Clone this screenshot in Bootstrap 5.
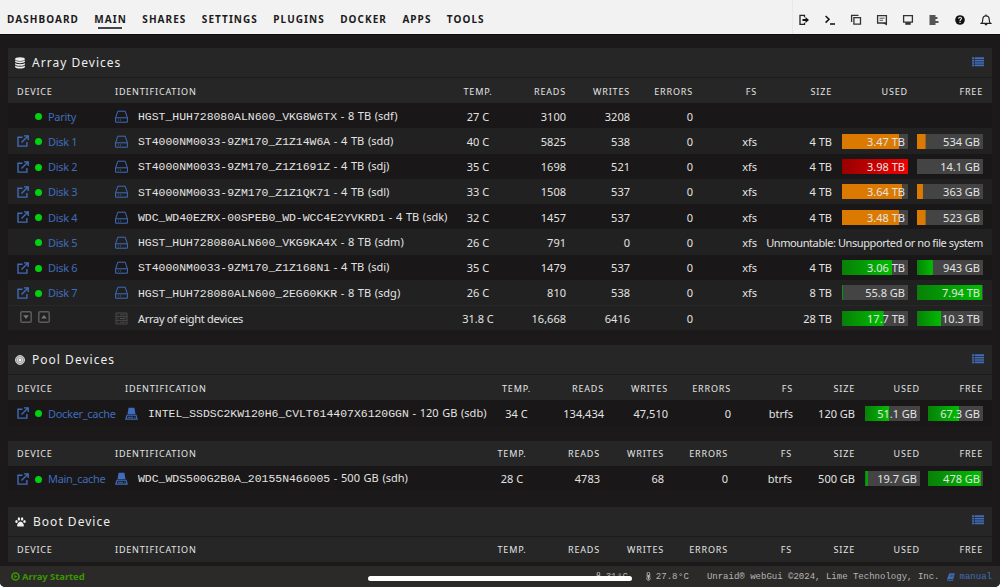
<!DOCTYPE html>
<html lang="en">
<head>
  <meta charset="UTF-8">
  <meta name="viewport" content="width=device-width, initial-scale=1.0">
  <title>Tower/Main</title>
  <!-- Bootstrap CSS -->
  <link href="https://cdn.jsdelivr.net/npm/bootstrap@5.3.0/dist/css/bootstrap.min.css" rel="stylesheet">
  <style>
    html {
      background-color: #fff;
      overflow: hidden;
    }
    body {
      height: 587px;
      overflow: hidden;
      font-family: "Noto Sans", sans-serif;
      font-size: 11px;
      line-height: 1;
      color: #e4e4e4;
      background-color: #1b1919;
      border-radius: 0 0 5px 5px;
    }
    svg {
      display: block;
      flex: none;
    }
    a {
      color: #406cbb;
      text-decoration: none;
    }
    /* top menu */
    .top-menu {
      height: 35px;
      background-color: #f2f2f2;
      border-bottom: 1px solid #0e0d0d;
      color: #1c1b1b;
    }
    .menu-links {
      gap: 15.4px;
      padding: 3px 0 0 7px;
    }
    .menu-links a {
      color: #1c1b1b;
      font-size: 10px;
      font-weight: 700;
      letter-spacing: 1.06px;
      height: 26px;
      line-height: 32px;
    }
    .menu-links a.active {
      background: linear-gradient(#444, #444) 4px 100% / 24px 2px no-repeat;
    }
    .menu-tools {
      border-left: 1px solid #e8e8e8;
      padding: 5px 8px 0 5px;
      gap: 14px;
    }
    /* section title */
    .array-part { margin-top: 13px; }
    .pool-part { margin-top: 15px; }
    .boot-part { margin-top: 16px; }
    .section-bar {
      height: 30px;
      padding: 0 8px 0 7px;
      background-color: #262626;
      border-bottom: 1px solid #1c1c1c;
    }
    .section-bar h2 {
      font-size: 12px;
      font-weight: 400;
      letter-spacing: 1.02px;
      margin: 0;
      color: #eee;
    }
    .section-name {
      gap: 7px;
      padding-top: 1px;
    }
    .view-toggle {
      padding-bottom: 2px;
    }
    /* device tables */
    .dev-table {
      table-layout: fixed;
      width: 984px;
      border-collapse: separate;
      border-spacing: 0;
    }
    #main-table { margin-top: 15px; }
    .dev-table th {
      height: 25px;
      padding: 1px 0 0;
      font-size: 9px;
      font-weight: 400;
      letter-spacing: .83px;
      background-color: #262626;
      vertical-align: middle;
    }
    .dev-table td {
      height: 25.25px;
      padding: 1px 0 0;
      white-space: nowrap;
      vertical-align: middle;
      background-color: #191717;
    }
    .dev-table tr:nth-child(even) td {
      background-color: #212121;
    }
    .dev-table tr.totals td {
      background-color: #212121;
      border-top: 1px solid #282828;
      padding-top: 0;
    }
    .dev-table th:first-child,
    .dev-table td:first-child {
      padding-left: 9px;
    }
    .dev-table .note {
      letter-spacing: -.41px;
    }
    .open-slot {
      width: 18px;
    }
    .orb {
      width: 7px;
      height: 7px;
      border-radius: 50%;
      background-color: #00d20f;
      margin: 1px 6px 0 0;
    }
    .dev-name {
      letter-spacing: -.3px;
    }
    .id-row {
      gap: 10px;
    }
    .id-text {
      word-spacing: .8px;
    }
    .sum-text {
      letter-spacing: -.28px;
    }
    .sort-icons {
      gap: 6px;
      padding: 0 0 2px 3px;
    }
    .disk-id {
      font-family: "Liberation Mono", monospace;
      font-size: 11.45px;
    }
    .meter {
      width: 55px;
      height: 15px;
      background-color: #444;
      padding-right: 3px;
      line-height: 16px;
      background-repeat: no-repeat;
    }
    #array-table .meter { width: 66px; }
    .meter-orange { background-image: linear-gradient(#dc7900, #dc7900); }
    .meter-green { background-image: linear-gradient(90deg, #088008, #00bd00); }
    .meter-red { background-image: linear-gradient(90deg, #980000, #f00000); }
    /* footer */
    .status-bar {
      height: 21px;
      background-color: #2b2a29;
      padding: 0 8px 0 11px;
    }
    .status-text {
      gap: 2px;
      font-size: 9.5px;
      font-weight: 700;
      letter-spacing: -.07px;
      color: #3a9500;
    }
    .status-info {
      font-family: "Liberation Mono", monospace;
      font-size: 9.03px;
      color: #b5b5b5;
    }
    .reading { margin: 0 18px 0 5px; }
    .manual-link { margin-left: 7px; gap: 5px; }
    .home-bar {
      left: 368px;
      top: 576px;
      width: 264px;
      height: 5px;
      border-radius: 3px;
      background-color: #fff;
    }
  </style>
</head>
<body class="d-flex flex-column">

  <!-- Icon set -->
  <svg width="0" height="0" class="position-absolute">
    <symbol id="i-open" viewBox="0 0 12 12"><path d="M5.5 2.2H1v8.9h8.9V7M7 .9h4.2v4.2M11 1.1 4.5 7.600" fill="none" stroke="currentColor" stroke-width="1.4"/></symbol>
    <symbol id="i-hdd" viewBox="0 0 13 13"><path d="M2.8 1.2h7.4l2.2 6.6v4.4H.6V7.8zM.6 7.8h11.8M3 10h.9M5 10h.9" fill="none" stroke="currentColor" stroke-width="1"/></symbol>
    <symbol id="i-ssd" viewBox="0 0 12 12"><path d="M3.300.8h5.400l1 5.900H2.300z" fill="currentColor"/><path d="M1.800 7.600h8.400l1 3.600H.8z" fill="none" stroke="currentColor" stroke-width="1.100"/><path d="M2.500 9.400h5M8.500 9.400h1" stroke="currentColor" stroke-width="1"/></symbol>
    <symbol id="i-server" viewBox="0 0 13 13"><path d="M1 1h11v11H1zM1 4.7h11M1 8.3h11M2.5 2.9h1M2.5 6.5h1M2.5 10.2h1M5 2.9h5.5M5 6.5h5.5M5 10.2h5.5" fill="none" stroke="#555" stroke-width=".8"/></symbol>
    <symbol id="i-down" viewBox="0 0 12 12"><rect x=".8" y=".8" width="10.4" height="10.4" rx="1.3" fill="none" stroke="#5c5c5c" stroke-width="1.5"/><path d="M3.2 4.3h5.6L6 7.9z" fill="#777"/></symbol>
    <symbol id="i-up" viewBox="0 0 12 12"><rect x=".8" y=".8" width="10.4" height="10.4" rx="1.3" fill="none" stroke="#5c5c5c" stroke-width="1.5"/><path d="M3.2 7.6h5.6L6 4z" fill="#777"/></symbol>
    <symbol id="i-list" viewBox="0 0 12 10"><path d="M0 1.2h2M0 3.6h2M0 6h2M0 8.4h2M2.6 1.2H12M2.6 3.6H12M2.6 6H12M2.6 8.4H12" stroke="currentColor" stroke-width="1.7"/></symbol>
    <symbol id="i-temp" viewBox="0 0 5 9"><path d="M1.2 1.5a1.2 1.2 0 0 1 2.500 0v3.900a1.700 1.700 0 1 1-2.500 0z" fill="none" stroke="#b5b5b5"/><path d="M2.500 3v4.500" stroke="#b5b5b5"/></symbol>
  </svg>

  <!-- Menu -->
  <nav class="top-menu d-flex justify-content-between flex-shrink-0">
    <div class="menu-links d-flex">
      <a href="#">DASHBOARD</a>
      <a href="#" class="active">MAIN</a>
      <a href="#">SHARES</a>
      <a href="#">SETTINGS</a>
      <a href="#">PLUGINS</a>
      <a href="#">DOCKER</a>
      <a href="#">APPS</a>
      <a href="#">TOOLS</a>
    </div>
    <div class="menu-tools d-flex align-items-center">
      <svg width="12" height="12" viewBox="0 0 12 12"><path d="M6.5 3.2V1.4H2v9h4.5V8.8" fill="none" stroke="#222" stroke-width="1.3"/><path d="M4.5 5h3V3l3.5 3-3.5 3V7h-3z" fill="#111"/></svg>
      <svg width="12" height="12" viewBox="0 0 12 12"><path d="M1.6 2 5 5.3 1.6 8.6M6 10h5" fill="none" stroke="#111" stroke-width="1.5"/></svg>
      <svg width="12" height="12" viewBox="0 0 12 12"><path d="M1.6 8V1.4h6.9M3.9 3.6h6.6v6.6H3.9z" fill="none" stroke="#333" stroke-width="1.3"/></svg>
      <svg width="12" height="12" viewBox="0 0 12 12"><path d="M1.6 1.6h8.8v7.4H1.6z" fill="none" stroke="#333" stroke-width="1.3"/><path d="M3.5 4.2h5M3.500 6.300h3.500" stroke="#555" stroke-width="1"/><path d="M6.500 9h4.500v2.400z" fill="#333"/></svg>
      <svg width="12" height="12" viewBox="0 0 12 12"><path d="M1.6 1.6h8.8v6.6H1.6z" fill="none" stroke="#333" stroke-width="1.3"/><path d="M3.3 8.2h5.4v2.6H3.3z" fill="#333"/></svg>
      <svg width="12" height="12" viewBox="0 0 12 12"><path d="M1.5 2h6M1.5 4h8M1.5 6h6M1.5 8h9M1.5 10h6" stroke="#222" stroke-width="1.3"/></svg>
      <svg width="12" height="12" viewBox="0 0 12 12"><circle cx="6" cy="6" r="4.8" fill="#111"/><path d="M4.6 4.8c0-2 2.9-2 2.9-.2C7.5 5.6 6 5.5 6 6.9M6 7.8V9" fill="none" stroke="#f2f2f2" stroke-width="1.1"/></svg>
      <svg width="12" height="12" viewBox="0 0 12 12"><path d="M1.5 9.3h9C9.200 8.200 9.200 7 9.200 5.200 9.200 3 7.800 1.800 6 1.800S2.800 3 2.800 5.200C2.800 7 2.800 8.200 1.500 9.300z" fill="none" stroke="#222" stroke-width="1.2"/><path d="M6 .5v1.300M4.800 10.700h2.400" stroke="#222" stroke-width="1.2"/></svg>
    </div>
  </nav>

  <main class="flex-grow-1 overflow-hidden px-2">
    <!-- Array -->
    <section class="array-part">
      <div class="section-bar d-flex align-items-center justify-content-between">
        <div class="section-name d-flex align-items-center">
          <svg width="10" height="12" viewBox="0 0 10 12"><ellipse cx="5" cy="2.1" rx="4.900" ry="1.900" fill="#eee"/><path d="M.1 3.300c1.500 1.600 8.300 1.600 9.800 0v1.500c-1 1.800-8.800 1.800-9.800 0zM.1 6c1.500 1.600 8.300 1.600 9.800 0v1.400c-1 1.800-8.800 1.800-9.800 0zM.1 8.600c1.500 1.600 8.300 1.600 9.800 0v1.300c-1 2.200-8.800 2.200-9.800 0z" fill="#eee"/></svg>
          <h2>Array Devices</h2>
        </div>
        <a href="#" class="view-toggle"><svg width="12" height="10"><use href="#i-list"/></svg></a>
      </div>
      <table class="dev-table" id="array-table"></table>
    </section>

    <!-- Pools -->
    <section class="pool-part">
      <div class="section-bar d-flex align-items-center justify-content-between">
        <div class="section-name d-flex align-items-center">
          <svg width="10" height="10" viewBox="0 0 10 10"><circle cx="5" cy="5" r="4.500" fill="#999" stroke="#ddd" stroke-width=".9"/><circle cx="5" cy="5" r="2.700" fill="none" stroke="#e4e4e4" stroke-width=".8"/><circle cx="5" cy="5" r="1.200" fill="#fff"/></svg>
          <h2>Pool Devices</h2>
        </div>
        <a href="#" class="view-toggle"><svg width="12" height="10"><use href="#i-list"/></svg></a>
      </div>
      <table class="dev-table" id="docker-table"></table>
      <table class="dev-table" id="main-table"></table>
    </section>

    <!-- Boot -->
    <section class="boot-part">
      <div class="section-bar d-flex align-items-center justify-content-between">
        <div class="section-name d-flex align-items-center">
          <svg width="11" height="10" viewBox="0 0 11 10"><g fill="#eee"><ellipse cx="1.500" cy="4.500" rx="1.200" ry="1.600"/><ellipse cx="3.900" cy="2" rx="1.200" ry="1.700"/><ellipse cx="7.100" cy="2" rx="1.200" ry="1.700"/><ellipse cx="9.500" cy="4.500" rx="1.200" ry="1.600"/><path d="M5.500 4.400c1.700 0 3.400 2.400 3.400 4 0 1.800-2 1-3.400 1s-3.400.8-3.400-1c0-1.600 1.700-4 3.400-4z"/></g></svg>
          <h2>Boot Device</h2>
        </div>
        <a href="#" class="view-toggle"><svg width="12" height="10"><use href="#i-list"/></svg></a>
      </div>
      <table class="dev-table" id="boot-table"></table>
    </section>
  </main>

  <!-- Footer -->
  <footer class="status-bar d-flex align-items-center justify-content-between flex-shrink-0">
    <div class="status-text d-flex align-items-center">
      <svg width="9" height="9" viewBox="0 0 9 9"><circle cx="4.500" cy="4.500" r="3.500" fill="none" stroke="currentColor" stroke-width="1.700"/><path d="M3.400 2.700v3.600l3-1.800z" fill="currentColor"/></svg>
      Array Started
    </div>
    <div class="status-info d-flex align-items-center">
      <svg width="5" height="9"><use href="#i-temp"/></svg>
      <span class="reading">31&#8202;°C</span>
      <svg width="5" height="9"><use href="#i-temp"/></svg>
      <span class="reading">27.8&#8202;°C</span>
      <span>Unraid® webGui ©2024, Lime Technology, Inc.</span>
      <a href="#" class="manual-link d-flex align-items-center">
        <svg width="8" height="8" viewBox="0 0 8 8"><path d="M2.200.3h5.600L6.300 6H1.200c-.5 0-.5.800 0 .8h5.200L7.800 2l-1.600 5.700H1C0 7.700-.1 6.500.3 5.500z" fill="currentColor"/><path d="M3.200 2h3M2.900 3.300h3" stroke="#2b2a29" stroke-width=".5"/></svg>
        manual
      </a>
    </div>
  </footer>

  <div class="home-bar position-absolute"></div>

  <!-- Bootstrap JS -->
  <script src="https://cdn.jsdelivr.net/npm/bootstrap@5.3.0/dist/js/bootstrap.bundle.min.js"></script>
  <script>
    const heads = ['DEVICE', 'IDENTIFICATION', 'TEMP.', 'READS', 'WRITES', 'ERRORS', 'FS', 'SIZE', 'USED', 'FREE'];
    const icon = (name, size) => `<svg width="${size}" height="${size}"><use href="#i-${name}"/></svg>`;

    // usage bar: text, colour and percentage
    function meter(m) {
      if (!m) return '';
      return `<div class="meter ms-auto meter-${m[1]}" style="background-size:${m[2]}% 100%">${m[0]}</div>`;
    }

    function deviceCell(d) {
      if (d.total) return `<div class="sort-icons d-flex">${icon('down', 12)}${icon('up', 12)}</div>`;
      return `<div class="d-flex align-items-center"><a href="#" class="open-slot">${d.open ? icon('open', 12) : ''}</a>
        <span class="orb"></span><a href="#" class="dev-name">${d.name}</a></div>`;
    }

    function idCell(d, type) {
      if (d.total) return `<div class="id-row d-flex align-items-center">${icon('server', 13)}<span class="sum-text">${d.id}</span></div>`;
      return `<div class="id-row d-flex align-items-center"><a href="#">${icon(type, 13)}</a>
        <span class="id-text"><span class="disk-id">${d.id}</span> - ${d.dev}</span></div>`;
    }

    function fillTable(id, cols, type, rows) {
      let html = '<colgroup>' + cols.map(c => `<col style="width:${c}px">`).join('') + '</colgroup><thead><tr>';
      heads.forEach((h, i) => {
        html += `<th class="${i < 2 ? 'text-start' : i == 2 ? 'text-center' : 'text-end'}">${h}</th>`;
      });
      html += '<th></th></tr></thead><tbody>';
      rows.forEach(d => {
        html += `<tr class="${d.total ? 'totals' : ''}"><td>${deviceCell(d)}</td><td>${idCell(d, type)}</td><td class="text-center">${d.n[0]} C</td>`;
        for (let i = 1; i < 4; i++) html += `<td class="text-end">${d.n[i]}</td>`;
        html += `<td class="text-end">${d.fs || ''}</td>`;
        if (d.note) {
          html += `<td colspan="3" class="text-end note">${d.note}</td>`;
        } else {
          html += `<td class="text-end">${d.size || ''}</td><td class="text-end">${meter(d.used)}</td><td class="text-end">${meter(d.free)}</td>`;
        }
        html += '<td></td></tr>';
      });
      document.getElementById(id).innerHTML = html + '</tbody>';
    }

    fillTable('array-table', [107, 333, 60, 58, 64, 63, 64, 75, 76, 75, 9], 'hdd', [
      { name: 'Parity', id: 'HGST_HUH728080ALN600_VKG8W6TX', dev: '8 TB (sdf)', n: [27, 3100, 3208, 0] },
      { open: 1, name: 'Disk 1', id: 'ST4000NM0033-9ZM170_Z1Z14W6A', dev: '4 TB (sdd)', n: [40, 5825, 538, 0], fs: 'xfs', size: '4 TB', used: ['3.47 TB', 'orange', 87], free: ['534 GB', 'orange', 13] },
      { open: 1, name: 'Disk 2', id: 'ST4000NM0033-9ZM170_Z1Z1691Z', dev: '4 TB (sdj)', n: [35, 1698, 521, 0], fs: 'xfs', size: '4 TB', used: ['3.98 TB', 'red', 100], free: ['14.1 GB', 'red', 0] },
      { open: 1, name: 'Disk 3', id: 'ST4000NM0033-9ZM170_Z1Z1QK71', dev: '4 TB (sdl)', n: [33, 1508, 537, 0], fs: 'xfs', size: '4 TB', used: ['3.64 TB', 'orange', 91], free: ['363 GB', 'orange', 9] },
      { open: 1, name: 'Disk 4', id: 'WDC_WD40EZRX-00SPEB0_WD-WCC4E2YVKRD1', dev: '4 TB (sdk)', n: [32, 1457, 537, 0], fs: 'xfs', size: '4 TB', used: ['3.48 TB', 'orange', 87], free: ['523 GB', 'orange', 13] },
      { name: 'Disk 5', id: 'HGST_HUH728080ALN600_VKG9KA4X', dev: '8 TB (sdm)', n: [26, 791, 0, 0], fs: 'xfs', note: 'Unmountable: Unsupported or no file system' },
      { open: 1, name: 'Disk 6', id: 'ST4000NM0033-9ZM170_Z1Z168N1', dev: '4 TB (sdi)', n: [35, 1479, 537, 0], fs: 'xfs', size: '4 TB', used: ['3.06 TB', 'green', 76], free: ['943 GB', 'green', 24] },
      { open: 1, name: 'Disk 7', id: 'HGST_HUH728080ALN600_2EG60KKR', dev: '8 TB (sdg)', n: [26, 810, 538, 0], fs: 'xfs', size: '8 TB', used: ['55.8 GB', 'green', 2], free: ['7.94 TB', 'green', 99] },
      { total: 1, id: 'Array of eight devices', n: [31.8, '16,668', 6416, 0], size: '28 TB', used: ['17.7 TB', 'green', 63], free: ['10.3 TB', 'green', 37] }
    ]);
    fillTable('docker-table', [117, 361, 61, 57, 64, 63, 62, 62, 65, 63, 9], 'ssd', [
      { open: 1, name: 'Docker_cache', id: 'INTEL_SSDSC2KW120H6_CVLT614407X6120GGN', dev: '120 GB (sdb)', n: [34, '134,434', '47,510', 0], fs: 'btrfs', size: '120 GB', used: ['51.1 GB', 'green', 44], free: ['67.3 GB', 'green', 57] }
    ]);
    const cols = [107, 366, 62, 57, 64, 64, 64, 63, 65, 63, 9];
    fillTable('main-table', cols, 'ssd', [
      { open: 1, name: 'Main_cache', id: 'WDC_WDS500G2B0A_20155N466005', dev: '500 GB (sdh)', n: [28, 4783, 68, 0], fs: 'btrfs', size: '500 GB', used: ['19.7 GB', 'green', 5], free: ['478 GB', 'green', 97] }
    ]);
    fillTable('boot-table', cols, 'ssd', []);
  </script>
</body>
</html>
